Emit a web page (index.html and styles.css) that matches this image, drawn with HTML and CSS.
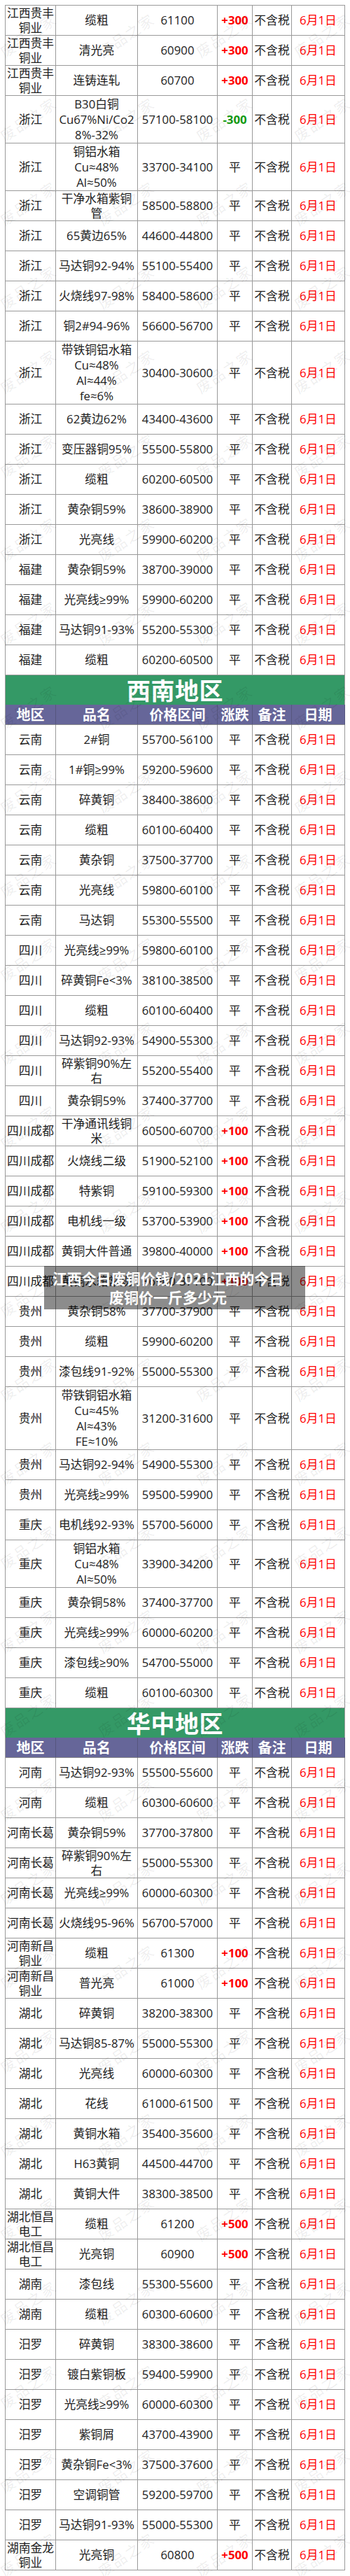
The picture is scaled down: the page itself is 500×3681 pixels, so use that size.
FILE: index.html
```html
<!DOCTYPE html>
<html lang="zh-CN">
<head>
<meta charset="utf-8">
<title>江西今日废铜价钱</title>
<link rel="stylesheet" href="styles.css">
</head>
<body>
<div class="page">
  <div class="sheet">
    <div class="row"><div class="r t2">江西贵丰<br>铜业</div><div class="p">缆粗</div><div class="pr">61100</div><div class="c up">+300</div><div class="n">不含税</div><div class="d">6月1日</div></div>
    <div class="row"><div class="r t2">江西贵丰<br>铜业</div><div class="p">清光亮</div><div class="pr">60900</div><div class="c up">+300</div><div class="n">不含税</div><div class="d">6月1日</div></div>
    <div class="row"><div class="r t2">江西贵丰<br>铜业</div><div class="p">连铸连轧</div><div class="pr">60700</div><div class="c up">+300</div><div class="n">不含税</div><div class="d">6月1日</div></div>
    <div class="row h3"><div class="r">浙江</div><div class="p">B30白铜<br>Cu67%Ni/Co2<br>8%-32%</div><div class="pr">57100-58100</div><div class="c down">-300</div><div class="n">不含税</div><div class="d">6月1日</div></div>
    <div class="row h3"><div class="r">浙江</div><div class="p">铜铝水箱<br>Cu≈48%<br>Al≈50%</div><div class="pr">33700-34100</div><div class="c">平</div><div class="n">不含税</div><div class="d">6月1日</div></div>
    <div class="row"><div class="r">浙江</div><div class="p t2">干净水箱紫铜<br>管</div><div class="pr">58500-58800</div><div class="c">平</div><div class="n">不含税</div><div class="d">6月1日</div></div>
    <div class="row"><div class="r">浙江</div><div class="p">65黄边65%</div><div class="pr">44600-44800</div><div class="c">平</div><div class="n">不含税</div><div class="d">6月1日</div></div>
    <div class="row"><div class="r">浙江</div><div class="p">马达铜92-94%</div><div class="pr">55100-55400</div><div class="c">平</div><div class="n">不含税</div><div class="d">6月1日</div></div>
    <div class="row"><div class="r">浙江</div><div class="p">火烧线97-98%</div><div class="pr">58400-58600</div><div class="c">平</div><div class="n">不含税</div><div class="d">6月1日</div></div>
    <div class="row"><div class="r">浙江</div><div class="p">铜2#94-96%</div><div class="pr">56600-56700</div><div class="c">平</div><div class="n">不含税</div><div class="d">6月1日</div></div>
    <div class="row h4"><div class="r">浙江</div><div class="p">带铁铜铝水箱<br>Cu≈48%<br>Al≈44%<br>fe≈6%</div><div class="pr">30400-30600</div><div class="c">平</div><div class="n">不含税</div><div class="d">6月1日</div></div>
    <div class="row"><div class="r">浙江</div><div class="p">62黄边62%</div><div class="pr">43400-43600</div><div class="c">平</div><div class="n">不含税</div><div class="d">6月1日</div></div>
    <div class="row"><div class="r">浙江</div><div class="p">变压器铜95%</div><div class="pr">55500-55800</div><div class="c">平</div><div class="n">不含税</div><div class="d">6月1日</div></div>
    <div class="row"><div class="r">浙江</div><div class="p">缆粗</div><div class="pr">60200-60500</div><div class="c">平</div><div class="n">不含税</div><div class="d">6月1日</div></div>
    <div class="row"><div class="r">浙江</div><div class="p">黄杂铜59%</div><div class="pr">38600-38900</div><div class="c">平</div><div class="n">不含税</div><div class="d">6月1日</div></div>
    <div class="row"><div class="r">浙江</div><div class="p">光亮线</div><div class="pr">59900-60200</div><div class="c">平</div><div class="n">不含税</div><div class="d">6月1日</div></div>
    <div class="row"><div class="r">福建</div><div class="p">黄杂铜59%</div><div class="pr">38700-39000</div><div class="c">平</div><div class="n">不含税</div><div class="d">6月1日</div></div>
    <div class="row"><div class="r">福建</div><div class="p">光亮线≥99%</div><div class="pr">59900-60200</div><div class="c">平</div><div class="n">不含税</div><div class="d">6月1日</div></div>
    <div class="row"><div class="r">福建</div><div class="p">马达铜91-93%</div><div class="pr">55200-55300</div><div class="c">平</div><div class="n">不含税</div><div class="d">6月1日</div></div>
    <div class="row"><div class="r">福建</div><div class="p">缆粗</div><div class="pr">60200-60500</div><div class="c">平</div><div class="n">不含税</div><div class="d">6月1日</div></div>

    <div class="region">西南地区</div>
    <div class="row head"><div>地区</div><div>品名</div><div>价格区间</div><div>涨跌</div><div>备注</div><div>日期</div></div>
    <div class="row"><div class="r">云南</div><div class="p">2#铜</div><div class="pr">55700-56100</div><div class="c">平</div><div class="n">不含税</div><div class="d">6月1日</div></div>
    <div class="row"><div class="r">云南</div><div class="p">1#铜≥99%</div><div class="pr">59200-59600</div><div class="c">平</div><div class="n">不含税</div><div class="d">6月1日</div></div>
    <div class="row"><div class="r">云南</div><div class="p">碎黄铜</div><div class="pr">38400-38600</div><div class="c">平</div><div class="n">不含税</div><div class="d">6月1日</div></div>
    <div class="row"><div class="r">云南</div><div class="p">缆粗</div><div class="pr">60100-60400</div><div class="c">平</div><div class="n">不含税</div><div class="d">6月1日</div></div>
    <div class="row"><div class="r">云南</div><div class="p">黄杂铜</div><div class="pr">37500-37700</div><div class="c">平</div><div class="n">不含税</div><div class="d">6月1日</div></div>
    <div class="row"><div class="r">云南</div><div class="p">光亮线</div><div class="pr">59800-60100</div><div class="c">平</div><div class="n">不含税</div><div class="d">6月1日</div></div>
    <div class="row"><div class="r">云南</div><div class="p">马达铜</div><div class="pr">55300-55500</div><div class="c">平</div><div class="n">不含税</div><div class="d">6月1日</div></div>
    <div class="row"><div class="r">四川</div><div class="p">光亮线≥99%</div><div class="pr">59800-60100</div><div class="c">平</div><div class="n">不含税</div><div class="d">6月1日</div></div>
    <div class="row"><div class="r">四川</div><div class="p">碎黄铜Fe&lt;3%</div><div class="pr">38100-38500</div><div class="c">平</div><div class="n">不含税</div><div class="d">6月1日</div></div>
    <div class="row"><div class="r">四川</div><div class="p">缆粗</div><div class="pr">60100-60400</div><div class="c">平</div><div class="n">不含税</div><div class="d">6月1日</div></div>
    <div class="row"><div class="r">四川</div><div class="p">马达铜92-93%</div><div class="pr">54900-55300</div><div class="c">平</div><div class="n">不含税</div><div class="d">6月1日</div></div>
    <div class="row"><div class="r">四川</div><div class="p t2">碎紫铜90%左<br>右</div><div class="pr">55200-55400</div><div class="c">平</div><div class="n">不含税</div><div class="d">6月1日</div></div>
    <div class="row"><div class="r">四川</div><div class="p">黄杂铜59%</div><div class="pr">37400-37700</div><div class="c">平</div><div class="n">不含税</div><div class="d">6月1日</div></div>
    <div class="row"><div class="r">四川成都</div><div class="p t2">干净通讯线铜<br>米</div><div class="pr">60500-60700</div><div class="c up">+100</div><div class="n">不含税</div><div class="d">6月1日</div></div>
    <div class="row"><div class="r">四川成都</div><div class="p">火烧线二级</div><div class="pr">51900-52100</div><div class="c up">+100</div><div class="n">不含税</div><div class="d">6月1日</div></div>
    <div class="row"><div class="r">四川成都</div><div class="p">特紫铜</div><div class="pr">59100-59300</div><div class="c up">+100</div><div class="n">不含税</div><div class="d">6月1日</div></div>
    <div class="row"><div class="r">四川成都</div><div class="p">电机线一级</div><div class="pr">53700-53900</div><div class="c up">+100</div><div class="n">不含税</div><div class="d">6月1日</div></div>
    <div class="row"><div class="r">四川成都</div><div class="p">黄铜大件普通</div><div class="pr">39800-40000</div><div class="c up">+100</div><div class="n">不含税</div><div class="d">6月1日</div></div>
    <div class="row"><div class="r">四川成都</div><div class="p">黄铜水箱常规</div><div class="pr">36900-37100</div><div class="c up">+100</div><div class="n">不含税</div><div class="d">6月1日</div></div>
    <div class="row"><div class="r">贵州</div><div class="p">黄杂铜58%</div><div class="pr">37700-37900</div><div class="c">平</div><div class="n">不含税</div><div class="d">6月1日</div></div>
    <div class="row"><div class="r">贵州</div><div class="p">缆粗</div><div class="pr">59900-60200</div><div class="c">平</div><div class="n">不含税</div><div class="d">6月1日</div></div>
    <div class="row"><div class="r">贵州</div><div class="p">漆包线91-92%</div><div class="pr">55000-55300</div><div class="c">平</div><div class="n">不含税</div><div class="d">6月1日</div></div>
    <div class="row h4"><div class="r">贵州</div><div class="p">带铁铜铝水箱<br>Cu≈45%<br>Al≈43%<br>FE≈10%</div><div class="pr">31200-31600</div><div class="c">平</div><div class="n">不含税</div><div class="d">6月1日</div></div>
    <div class="row"><div class="r">贵州</div><div class="p">马达铜92-94%</div><div class="pr">54900-55300</div><div class="c">平</div><div class="n">不含税</div><div class="d">6月1日</div></div>
    <div class="row"><div class="r">贵州</div><div class="p">光亮线≥99%</div><div class="pr">59500-59900</div><div class="c">平</div><div class="n">不含税</div><div class="d">6月1日</div></div>
    <div class="row"><div class="r">重庆</div><div class="p">电机线92-93%</div><div class="pr">55700-56000</div><div class="c">平</div><div class="n">不含税</div><div class="d">6月1日</div></div>
    <div class="row h3"><div class="r">重庆</div><div class="p">铜铝水箱<br>Cu≈48%<br>Al≈50%</div><div class="pr">33900-34200</div><div class="c">平</div><div class="n">不含税</div><div class="d">6月1日</div></div>
    <div class="row"><div class="r">重庆</div><div class="p">黄杂铜58%</div><div class="pr">37400-37700</div><div class="c">平</div><div class="n">不含税</div><div class="d">6月1日</div></div>
    <div class="row"><div class="r">重庆</div><div class="p">光亮线≥99%</div><div class="pr">60000-60200</div><div class="c">平</div><div class="n">不含税</div><div class="d">6月1日</div></div>
    <div class="row"><div class="r">重庆</div><div class="p">漆包线≥90%</div><div class="pr">54700-55000</div><div class="c">平</div><div class="n">不含税</div><div class="d">6月1日</div></div>
    <div class="row"><div class="r">重庆</div><div class="p">缆粗</div><div class="pr">60100-60300</div><div class="c">平</div><div class="n">不含税</div><div class="d">6月1日</div></div>

    <div class="region">华中地区</div>
    <div class="row head"><div>地区</div><div>品名</div><div>价格区间</div><div>涨跌</div><div>备注</div><div>日期</div></div>
    <div class="row"><div class="r">河南</div><div class="p">马达铜92-93%</div><div class="pr">55500-55600</div><div class="c">平</div><div class="n">不含税</div><div class="d">6月1日</div></div>
    <div class="row"><div class="r">河南</div><div class="p">缆粗</div><div class="pr">60300-60600</div><div class="c">平</div><div class="n">不含税</div><div class="d">6月1日</div></div>
    <div class="row"><div class="r">河南长葛</div><div class="p">黄杂铜59%</div><div class="pr">37700-37800</div><div class="c">平</div><div class="n">不含税</div><div class="d">6月1日</div></div>
    <div class="row"><div class="r">河南长葛</div><div class="p t2">碎紫铜90%左<br>右</div><div class="pr">55000-55300</div><div class="c">平</div><div class="n">不含税</div><div class="d">6月1日</div></div>
    <div class="row"><div class="r">河南长葛</div><div class="p">光亮线≥99%</div><div class="pr">60000-60300</div><div class="c">平</div><div class="n">不含税</div><div class="d">6月1日</div></div>
    <div class="row"><div class="r">河南长葛</div><div class="p">火烧线95-96%</div><div class="pr">56700-57000</div><div class="c">平</div><div class="n">不含税</div><div class="d">6月1日</div></div>
    <div class="row"><div class="r t2">河南新昌<br>铜业</div><div class="p">缆粗</div><div class="pr">61300</div><div class="c up">+100</div><div class="n">不含税</div><div class="d">6月1日</div></div>
    <div class="row"><div class="r t2">河南新昌<br>铜业</div><div class="p">普光亮</div><div class="pr">61000</div><div class="c up">+100</div><div class="n">不含税</div><div class="d">6月1日</div></div>
    <div class="row"><div class="r">湖北</div><div class="p">碎黄铜</div><div class="pr">38200-38300</div><div class="c">平</div><div class="n">不含税</div><div class="d">6月1日</div></div>
    <div class="row"><div class="r">湖北</div><div class="p">马达铜85-87%</div><div class="pr">55000-55300</div><div class="c">平</div><div class="n">不含税</div><div class="d">6月1日</div></div>
    <div class="row"><div class="r">湖北</div><div class="p">光亮线</div><div class="pr">60000-60300</div><div class="c">平</div><div class="n">不含税</div><div class="d">6月1日</div></div>
    <div class="row"><div class="r">湖北</div><div class="p">花线</div><div class="pr">61000-61500</div><div class="c">平</div><div class="n">不含税</div><div class="d">6月1日</div></div>
    <div class="row"><div class="r">湖北</div><div class="p">黄铜水箱</div><div class="pr">35400-35600</div><div class="c">平</div><div class="n">不含税</div><div class="d">6月1日</div></div>
    <div class="row"><div class="r">湖北</div><div class="p">H63黄铜</div><div class="pr">44500-44700</div><div class="c">平</div><div class="n">不含税</div><div class="d">6月1日</div></div>
    <div class="row"><div class="r">湖北</div><div class="p">黄铜大件</div><div class="pr">38300-38500</div><div class="c">平</div><div class="n">不含税</div><div class="d">6月1日</div></div>
    <div class="row"><div class="r t2">湖北恒昌<br>电工</div><div class="p">缆粗</div><div class="pr">61200</div><div class="c up">+500</div><div class="n">不含税</div><div class="d">6月1日</div></div>
    <div class="row"><div class="r t2">湖北恒昌<br>电工</div><div class="p">光亮铜</div><div class="pr">60900</div><div class="c up">+500</div><div class="n">不含税</div><div class="d">6月1日</div></div>
    <div class="row"><div class="r">湖南</div><div class="p">漆包线</div><div class="pr">55300-55600</div><div class="c">平</div><div class="n">不含税</div><div class="d">6月1日</div></div>
    <div class="row"><div class="r">湖南</div><div class="p">缆粗</div><div class="pr">60300-60600</div><div class="c">平</div><div class="n">不含税</div><div class="d">6月1日</div></div>
    <div class="row"><div class="r">汨罗</div><div class="p">碎黄铜</div><div class="pr">38300-38600</div><div class="c">平</div><div class="n">不含税</div><div class="d">6月1日</div></div>
    <div class="row"><div class="r">汨罗</div><div class="p">镀白紫铜板</div><div class="pr">59400-59900</div><div class="c">平</div><div class="n">不含税</div><div class="d">6月1日</div></div>
    <div class="row"><div class="r">汨罗</div><div class="p">光亮线≥99%</div><div class="pr">60000-60300</div><div class="c">平</div><div class="n">不含税</div><div class="d">6月1日</div></div>
    <div class="row"><div class="r">汨罗</div><div class="p">紫铜屑</div><div class="pr">43700-43900</div><div class="c">平</div><div class="n">不含税</div><div class="d">6月1日</div></div>
    <div class="row"><div class="r">汨罗</div><div class="p">黄杂铜Fe&lt;3%</div><div class="pr">37500-37600</div><div class="c">平</div><div class="n">不含税</div><div class="d">6月1日</div></div>
    <div class="row"><div class="r">汨罗</div><div class="p">空调铜管</div><div class="pr">59200-59700</div><div class="c">平</div><div class="n">不含税</div><div class="d">6月1日</div></div>
    <div class="row"><div class="r">汨罗</div><div class="p">马达铜91-93%</div><div class="pr">55000-55300</div><div class="c">平</div><div class="n">不含税</div><div class="d">6月1日</div></div>
    <div class="row"><div class="r t2">湖南金龙<br>铜业</div><div class="p">光亮铜</div><div class="pr">60800</div><div class="c up">+500</div><div class="n">不含税</div><div class="d">6月1日</div></div>
  </div>

  <div class="wm" aria-hidden="true">
    <i>废品之家</i><i>废品之家</i><i>废品之家</i><i>废品之家</i>
    <i>废品之家</i><i>废品之家</i><i>废品之家</i><i>废品之家</i>
    <i>废品之家</i><i>废品之家</i><i>废品之家</i><i>废品之家</i>
    <i>废品之家</i><i>废品之家</i><i>废品之家</i><i>废品之家</i>
    <i>废品之家</i><i>废品之家</i><i>废品之家</i><i>废品之家</i>
    <i>废品之家</i><i>废品之家</i><i>废品之家</i><i>废品之家</i>
    <i>废品之家</i><i>废品之家</i><i>废品之家</i><i>废品之家</i>
    <i>废品之家</i><i>废品之家</i><i>废品之家</i><i>废品之家</i>
    <i>废品之家</i><i>废品之家</i><i>废品之家</i><i>废品之家</i>
    <i>废品之家</i><i>废品之家</i><i>废品之家</i><i>废品之家</i>
    <i>废品之家</i><i>废品之家</i><i>废品之家</i><i>废品之家</i>
    <i>废品之家</i><i>废品之家</i><i>废品之家</i><i>废品之家</i>
    <i>废品之家</i><i>废品之家</i><i>废品之家</i><i>废品之家</i>
    <i>废品之家</i><i>废品之家</i><i>废品之家</i><i>废品之家</i>
    <i>废品之家</i><i>废品之家</i><i>废品之家</i><i>废品之家</i>
    <i>废品之家</i><i>废品之家</i><i>废品之家</i><i>废品之家</i>
    <i>废品之家</i><i>废品之家</i><i>废品之家</i><i>废品之家</i>
    <i>废品之家</i><i>废品之家</i><i>废品之家</i><i>废品之家</i>
    <i>废品之家</i><i>废品之家</i><i>废品之家</i><i>废品之家</i>
    <i>废品之家</i><i>废品之家</i><i>废品之家</i><i>废品之家</i>
    <i>废品之家</i><i>废品之家</i><i>废品之家</i><i>废品之家</i>
    <i>废品之家</i><i>废品之家</i><i>废品之家</i><i>废品之家</i>
    <i>废品之家</i><i>废品之家</i><i>废品之家</i><i>废品之家</i>
    <i>废品之家</i><i>废品之家</i><i>废品之家</i><i>废品之家</i>
    <i>废品之家</i><i>废品之家</i><i>废品之家</i><i>废品之家</i>
    <i>废品之家</i><i>废品之家</i><i>废品之家</i><i>废品之家</i>
    <i>废品之家</i><i>废品之家</i><i>废品之家</i><i>废品之家</i>
    <i>废品之家</i><i>废品之家</i><i>废品之家</i><i>废品之家</i>
    <i>废品之家</i><i>废品之家</i><i>废品之家</i><i>废品之家</i>
    <i>废品之家</i><i>废品之家</i><i>废品之家</i><i>废品之家</i>
    <i>废品之家</i><i>废品之家</i><i>废品之家</i><i>废品之家</i>
  </div>

  <div class="cap">江西今日废铜价钱/2021江西的今日<br>废铜价一斤多少元</div>
</div>
</body>
</html>
```

FILE: styles.css
```css
html, body {
  margin: 0;
  padding: 0;
  background: #ffffff;
}

.page {
  position: relative;
  width: 500px;
  height: 3681px;
  box-sizing: border-box;
  padding: 7px 0 8px 7px;
  overflow: hidden;
  font-family: "Open Sans", "Noto Sans CJK SC", sans-serif;
  color: #222222;
}

.sheet {
  width: 486px;
  box-sizing: border-box;
  border-left: 1px solid #9a9a9a;
  border-top: 1px solid #9a9a9a;
}

.row {
  display: grid;
  grid-template-columns: 72px 117px 114px 50px 56px 76px;
  height: 43px;
}

.row.h3 { height: 68px; }
.row.h4 { height: 90px; }

.row > div {
  display: flex;
  align-items: center;
  justify-content: center;
  text-align: center;
  box-sizing: border-box;
  border-right: 1px solid #9a9a9a;
  border-bottom: 1px solid #9a9a9a;
  font-size: 16.8px;
  line-height: 22px;
  white-space: nowrap;
}

.row > div.t2 {
  line-height: 21px;
}

.row .d {
  color: #ff0000;
}

.row .c.up {
  color: #ff0000;
  font-weight: 700;
}

.row .c.down {
  color: #139a13;
  font-weight: 700;
}

.region {
  height: 42px;
  background: #349966;
  color: #ffffff;
  font-family: "Noto Sans CJK SC", sans-serif;
  font-weight: 700;
  font-size: 34px;
  line-height: 42px;
  text-align: center;
  letter-spacing: 0.5px;
  border-right: 1px solid #9a9a9a;
  box-sizing: border-box;
}

.row.head {
  height: 29px;
  background: #666699;
}

.row.head > div {
  color: #ffffff;
  font-family: "Noto Sans CJK SC", sans-serif;
  font-weight: 700;
  font-size: 20px;
  line-height: 28px;
  border-right-color: #56567e;
  border-bottom-color: #8a8a8a;
}

.wm {
  position: absolute;
  top: -10px;
  left: -30px;
  width: 560px;
  display: grid;
  grid-template-columns: repeat(4, 140px);
  grid-auto-rows: 120px;
  place-items: center;
  pointer-events: none;
}

.wm i {
  font-style: normal;
  font-family: "Noto Sans CJK SC", sans-serif;
  font-size: 21px;
  letter-spacing: 2px;
  color: rgba(0, 0, 0, 0.08);
  transform: rotate(-34deg);
  white-space: nowrap;
}

.cap {
  position: absolute;
  left: 63px;
  top: 1809px;
  width: 373px;
  height: 62px;
  box-sizing: border-box;
  padding: 0 25px 0 6px;
  display: flex;
  align-items: center;
  justify-content: center;
  text-align: center;
  background: rgba(0, 0, 0, 0.45);
  color: #ffffff;
  font-family: "Noto Sans CJK SC", sans-serif;
  font-weight: 700;
  font-size: 21px;
  line-height: 27px;
  white-space: nowrap;
}
```
